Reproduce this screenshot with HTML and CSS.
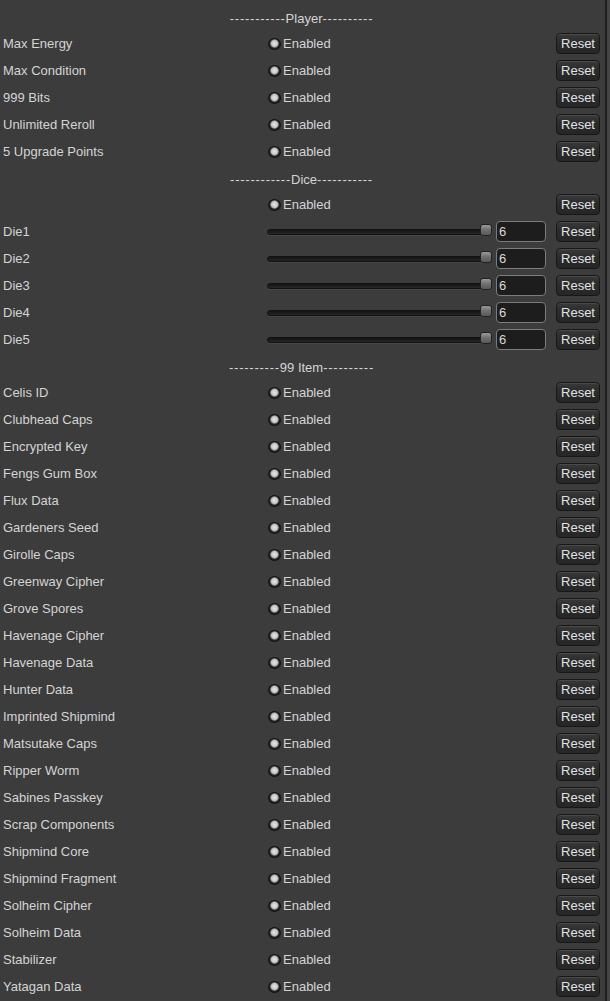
FILE: index.html
```html
<!DOCTYPE html>
<html>
<head>
<meta charset="utf-8">
<link rel="stylesheet" href="styles.css">
</head>
<body>
<div class="frame">
<div class="panel">
  <div class="header"><span class="dash">-----------</span>Player<span class="dash">----------</span></div>
  <div class="row"><span class="label">Max Energy</span><span class="toggle"><i class="knob"></i>Enabled</span><button class="reset">Reset</button></div>
  <div class="row"><span class="label">Max Condition</span><span class="toggle"><i class="knob"></i>Enabled</span><button class="reset">Reset</button></div>
  <div class="row"><span class="label">999 Bits</span><span class="toggle"><i class="knob"></i>Enabled</span><button class="reset">Reset</button></div>
  <div class="row"><span class="label">Unlimited Reroll</span><span class="toggle"><i class="knob"></i>Enabled</span><button class="reset">Reset</button></div>
  <div class="row"><span class="label">5 Upgrade Points</span><span class="toggle"><i class="knob"></i>Enabled</span><button class="reset">Reset</button></div>

  <div class="header"><span class="dash">------------</span>Dice<span class="dash">-----------</span></div>
  <div class="row"><span class="label"></span><span class="toggle"><i class="knob"></i>Enabled</span><button class="reset">Reset</button></div>
  <div class="row"><span class="label">Die1</span><span class="sliderbox"><span class="slider"><span class="track"></span><span class="thumb"></span></span><span class="field">6</span></span><button class="reset">Reset</button></div>
  <div class="row"><span class="label">Die2</span><span class="sliderbox"><span class="slider"><span class="track"></span><span class="thumb"></span></span><span class="field">6</span></span><button class="reset">Reset</button></div>
  <div class="row"><span class="label">Die3</span><span class="sliderbox"><span class="slider"><span class="track"></span><span class="thumb"></span></span><span class="field">6</span></span><button class="reset">Reset</button></div>
  <div class="row"><span class="label">Die4</span><span class="sliderbox"><span class="slider"><span class="track"></span><span class="thumb"></span></span><span class="field">6</span></span><button class="reset">Reset</button></div>
  <div class="row"><span class="label">Die5</span><span class="sliderbox"><span class="slider"><span class="track"></span><span class="thumb"></span></span><span class="field">6</span></span><button class="reset">Reset</button></div>

  <div class="header"><span class="dash">----------</span>99 Item<span class="dash">----------</span></div>
  <div class="row"><span class="label">Celis ID</span><span class="toggle"><i class="knob"></i>Enabled</span><button class="reset">Reset</button></div>
  <div class="row"><span class="label">Clubhead Caps</span><span class="toggle"><i class="knob"></i>Enabled</span><button class="reset">Reset</button></div>
  <div class="row"><span class="label">Encrypted Key</span><span class="toggle"><i class="knob"></i>Enabled</span><button class="reset">Reset</button></div>
  <div class="row"><span class="label">Fengs Gum Box</span><span class="toggle"><i class="knob"></i>Enabled</span><button class="reset">Reset</button></div>
  <div class="row"><span class="label">Flux Data</span><span class="toggle"><i class="knob"></i>Enabled</span><button class="reset">Reset</button></div>
  <div class="row"><span class="label">Gardeners Seed</span><span class="toggle"><i class="knob"></i>Enabled</span><button class="reset">Reset</button></div>
  <div class="row"><span class="label">Girolle Caps</span><span class="toggle"><i class="knob"></i>Enabled</span><button class="reset">Reset</button></div>
  <div class="row"><span class="label">Greenway Cipher</span><span class="toggle"><i class="knob"></i>Enabled</span><button class="reset">Reset</button></div>
  <div class="row"><span class="label">Grove Spores</span><span class="toggle"><i class="knob"></i>Enabled</span><button class="reset">Reset</button></div>
  <div class="row"><span class="label">Havenage Cipher</span><span class="toggle"><i class="knob"></i>Enabled</span><button class="reset">Reset</button></div>
  <div class="row"><span class="label">Havenage Data</span><span class="toggle"><i class="knob"></i>Enabled</span><button class="reset">Reset</button></div>
  <div class="row"><span class="label">Hunter Data</span><span class="toggle"><i class="knob"></i>Enabled</span><button class="reset">Reset</button></div>
  <div class="row"><span class="label">Imprinted Shipmind</span><span class="toggle"><i class="knob"></i>Enabled</span><button class="reset">Reset</button></div>
  <div class="row"><span class="label">Matsutake Caps</span><span class="toggle"><i class="knob"></i>Enabled</span><button class="reset">Reset</button></div>
  <div class="row"><span class="label">Ripper Worm</span><span class="toggle"><i class="knob"></i>Enabled</span><button class="reset">Reset</button></div>
  <div class="row"><span class="label">Sabines Passkey</span><span class="toggle"><i class="knob"></i>Enabled</span><button class="reset">Reset</button></div>
  <div class="row"><span class="label">Scrap Components</span><span class="toggle"><i class="knob"></i>Enabled</span><button class="reset">Reset</button></div>
  <div class="row"><span class="label">Shipmind Core</span><span class="toggle"><i class="knob"></i>Enabled</span><button class="reset">Reset</button></div>
  <div class="row"><span class="label">Shipmind Fragment</span><span class="toggle"><i class="knob"></i>Enabled</span><button class="reset">Reset</button></div>
  <div class="row"><span class="label">Solheim Cipher</span><span class="toggle"><i class="knob"></i>Enabled</span><button class="reset">Reset</button></div>
  <div class="row"><span class="label">Solheim Data</span><span class="toggle"><i class="knob"></i>Enabled</span><button class="reset">Reset</button></div>
  <div class="row"><span class="label">Stabilizer</span><span class="toggle"><i class="knob"></i>Enabled</span><button class="reset">Reset</button></div>
  <div class="row"><span class="label">Yatagan Data</span><span class="toggle"><i class="knob"></i>Enabled</span><button class="reset">Reset</button></div>
</div>
<div class="scroll"></div>
</div>
</body>
</html>
```

FILE: styles.css
```css
html, body {
  margin: 0;
  padding: 0;
  background: #3c3c3c;
  overflow: hidden;
}
body {
  font-family: "Liberation Sans", Arial, sans-serif;
  font-size: 13px;
  color: #d4d4d4;
}
.frame {
  display: flex;
  width: 610px;
  height: 1001px;
}
.panel {
  width: 605px;
  padding-top: 4px;
  box-sizing: border-box;
}
.scroll {
  width: 5px;
  border-left: 2px solid #1f1f1f;
  background: #454545;
  box-sizing: border-box;
}
.header {
  height: 26px;
  box-sizing: border-box;
  padding-top: 6px;
  line-height: 17px;
  text-align: center;
  padding-right: 2px;
  white-space: pre;
}
.dash {
  letter-spacing: 0.75px;
}
.row {
  display: grid;
  grid-template-columns: 264px 1fr 44px;
  align-items: center;
  height: 27px;
  padding: 0 5px 0 3px;
}
.label {
  white-space: nowrap;
  line-height: 17px;
}
.toggle {
  display: flex;
  align-items: center;
  gap: 2px;
  margin-left: 1px;
  line-height: 17px;
}
.knob {
  display: block;
  width: 13px;
  height: 12px;
  box-sizing: border-box;
  border-radius: 50%;
  border: 1px solid #141414;
  background: radial-gradient(ellipse at 50% 45%, #e6e6e6 0, #c6c6c6 3px, #8a8a8a 3.8px, #262626 4.6px, #1e1e1e 100%);
}
.reset {
  height: 21px;
  width: 44px;
  margin: 0;
  padding: 0;
  box-sizing: border-box;
  border: 1px solid #171717;
  border-radius: 4px;
  background: linear-gradient(#3a3a3a, #2c2c2c 40%, #262626);
  box-shadow: inset 0 1px 0 #4a4a4a;
  color: #e2e2e2;
  font-family: "Liberation Sans", Arial, sans-serif;
  font-size: 13px;
  line-height: 17px;
  text-align: center;
}
.sliderbox {
  display: flex;
  align-items: center;
}
.slider {
  position: relative;
  width: 225px;
  height: 21px;
  display: flex;
  align-items: center;
}
.track {
  display: block;
  width: 219px;
  height: 6px;
  box-sizing: border-box;
  border-radius: 3px;
  border: 1px solid #121212;
  background: linear-gradient(#141414, #262626);
  box-shadow: 0 1px 0 #474747;
}
.thumb {
  position: absolute;
  right: 0;
  top: 3px;
  width: 12px;
  height: 12px;
  box-sizing: border-box;
  border-radius: 3px;
  border: 1px solid #222;
  background: linear-gradient(#9a9a9a, #6e6e6e 50%, #5a5a5a);
}
.field {
  display: block;
  margin-left: 4px;
  width: 50px;
  height: 21px;
  box-sizing: border-box;
  border: 1px solid #7c7c7c;
  border-radius: 4px;
  background: #1d1d1d;
  padding: 1px 0 0 2px;
  line-height: 17px;
  color: #d8d8d8;
}
```
